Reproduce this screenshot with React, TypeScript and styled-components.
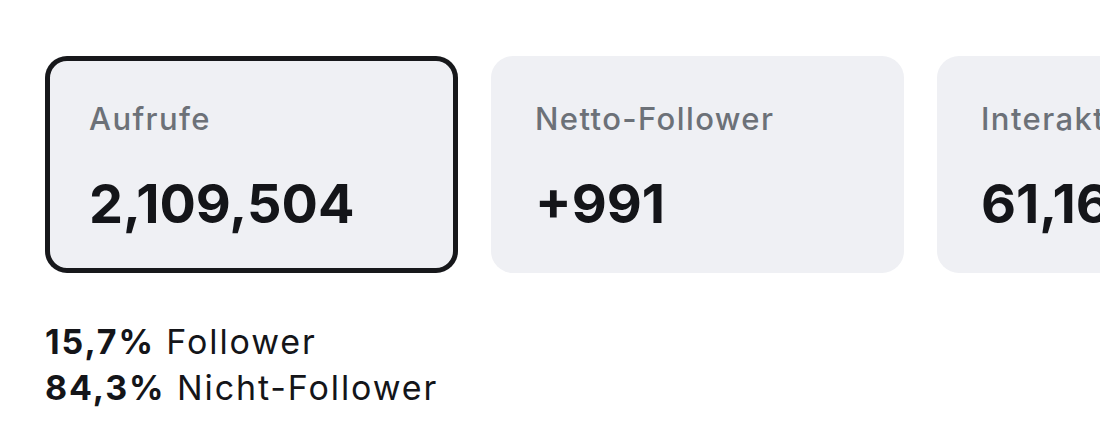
import React from "react";
import styled, { createGlobalStyle } from "styled-components";

const GlobalStyle = createGlobalStyle`
  html, body {
    margin: 0;
    padding: 0;
    background: #ffffff;
    overflow: hidden;
  }
  body {
    font-family: Inter, "Noto Sans", "Liberation Sans", sans-serif;
    -webkit-font-smoothing: antialiased;
  }
`;

const PageSc = styled.div`
  display: flex;
  flex-direction: column;
  gap: 46px;
  padding: 56px 0 0 45px;
`;

const CardRowSc = styled.div`
  display: flex;
  gap: 33px;
`;

const CardSc = styled.div<{ $active?: boolean }>`
  flex-shrink: 0;
  box-sizing: border-box;
  width: 413px;
  height: 217px;
  display: flex;
  flex-direction: column;
  gap: 37px;
  padding: 45px 0 0 44px;
  border-radius: 22px;
  background: #eff0f4;
  box-shadow: ${(p) => (p.$active ? "inset 0 0 0 5px #17181b" : "none")};
`;

const LabelSc = styled.div`
  font-size: 31px;
  font-weight: 500;
  line-height: 36px;
  letter-spacing: 1.4px;
  color: #6c7178;
  white-space: nowrap;
`;

const ValueSc = styled.div`
  font-size: 54px;
  font-weight: 700;
  line-height: 60px;
  color: #141519;
  white-space: nowrap;
`;

const BreakdownSc = styled.div`
  display: flex;
  flex-direction: column;
`;

const BreakdownLineSc = styled.div`
  font-size: 34px;
  line-height: 46px;
  letter-spacing: 1.9px;
  color: #141519;

  b {
    font-weight: 700;
  }
`;

const stats = [
  { label: "Aufrufe", value: "2,109,504", active: true },
  { label: "Netto-Follower", value: "+991" },
  { label: "Interaktionen", value: "61,168" },
];

export default function App() {
  return (
    <>
      <GlobalStyle />
      <PageSc>
        <CardRowSc>
          {stats.map((s) => (
            <CardSc key={s.label} $active={s.active}>
              <LabelSc>{s.label}</LabelSc>
              <ValueSc>{s.value}</ValueSc>
            </CardSc>
          ))}
        </CardRowSc>
        <BreakdownSc>
          <BreakdownLineSc>
            <b>15,7%</b> Follower
          </BreakdownLineSc>
          <BreakdownLineSc>
            <b>84,3%</b> Nicht-Follower
          </BreakdownLineSc>
        </BreakdownSc>
      </PageSc>
    </>
  );
}
